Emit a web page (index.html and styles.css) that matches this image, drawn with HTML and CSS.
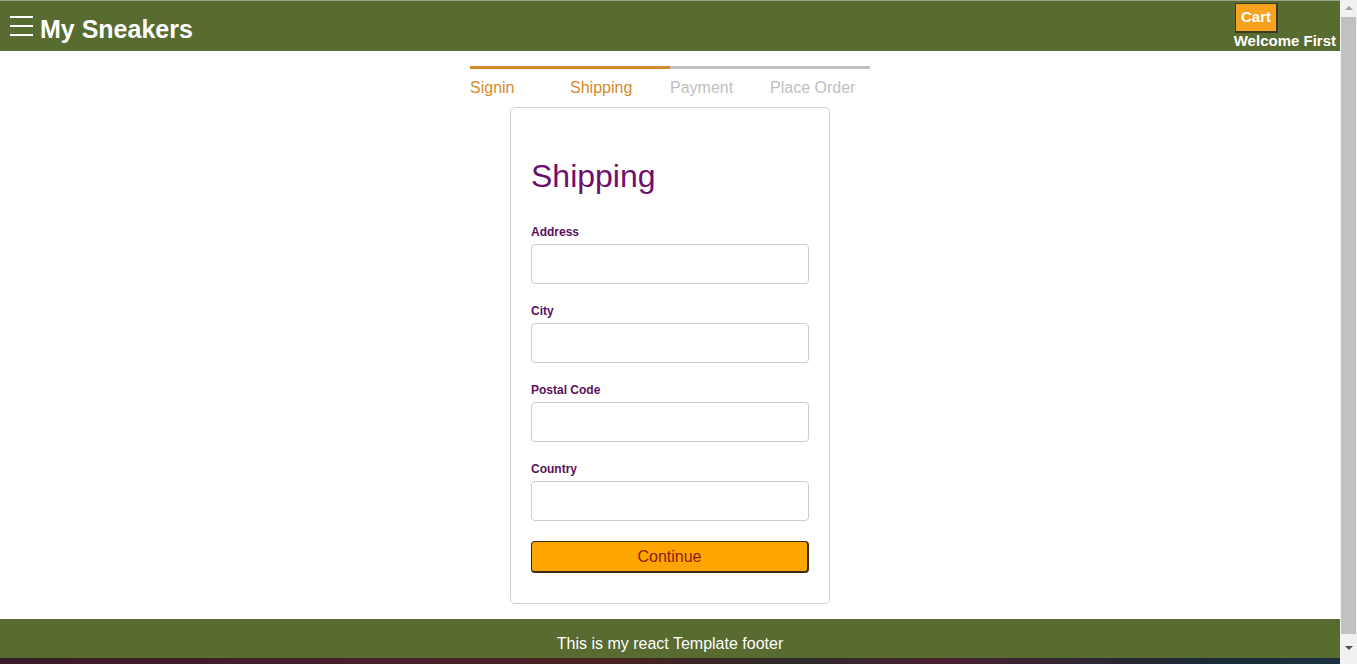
FILE: index.html
```html
<!DOCTYPE html>
<html lang="en">
<head>
<meta charset="utf-8">
<title>My Sneakers - Shipping</title>
<link rel="stylesheet" href="styles.css">
</head>
<body>
<div class="window">
  <div class="page">
    <header class="header">
      <div class="brand">
        <button class="menu-btn" aria-label="Menu">
          <svg width="23" height="22" viewBox="0 0 23 22"><path d="M0 2h23M0 11h23M0 20h23" stroke="#fff" stroke-width="2.2" fill="none"/></svg>
        </button>
        <a class="brand-name" href="#">My Sneakers</a>
      </div>
      <div class="header-links">
        <a class="cart" href="#">Cart</a>
        <a class="welcome" href="#">Welcome First</a>
      </div>
    </header>
    <main class="main">
      <div class="steps">
        <div class="step active">Signin</div>
        <div class="step active">Shipping</div>
        <div class="step">Payment</div>
        <div class="step">Place Order</div>
      </div>
      <form class="card">
        <h1 class="title">Shipping</h1>
        <div class="field">
          <label class="label" for="address">Address</label>
          <input class="input" id="address" type="text">
        </div>
        <div class="field">
          <label class="label" for="city">City</label>
          <input class="input" id="city" type="text">
        </div>
        <div class="field">
          <label class="label" for="postal">Postal Code</label>
          <input class="input" id="postal" type="text">
        </div>
        <div class="field">
          <label class="label" for="country">Country</label>
          <input class="input" id="country" type="text">
        </div>
        <button class="continue" type="button">Continue</button>
      </form>
    </main>
    <footer class="footer">This is my react Template footer</footer>
    <div class="taskbar"></div>
  </div>
  <div class="scrollbar">
    <div class="arrow up"></div>
    <div class="thumb"></div>
    <div class="arrow down"></div>
  </div>
</div>
</body>
</html>
```
FILE: styles.css
```css
* { box-sizing: border-box; }
html, body { margin: 0; padding: 0; height: 100%; overflow: hidden; }
body { font-family: "Liberation Sans", Arial, sans-serif; background: #fff; }

.window { display: flex; height: 664px; }
.page { flex: 1; display: flex; flex-direction: column; min-width: 0; }

.header {
  height: 51px;
  background: #586b31;
  border-top: 1px solid #9aa38a;
  display: flex;
  justify-content: space-between;
  align-items: flex-start;
  padding: 0 4px 0 10px;
  flex-shrink: 0;
}
.brand { display: flex; align-items: center; height: 50px; }
.menu-btn { background: none; border: 0; padding: 0; margin: 0 7px 0 0; display: flex; cursor: pointer; }
.brand-name { color: #fff; font-weight: bold; font-size: 25px; text-decoration: none; margin-top: 6px; }
.header-links { display: flex; flex-direction: column; align-items: flex-end; }
.cart {
  margin-top: 2px;
  margin-right: 58px;
  background: #f7a21c;
  color: #fff;
  font-weight: bold;
  font-size: 15px;
  text-decoration: none;
  padding: 4px 5px 5px;
  border: 1px solid #3d3a22;
  border-width: 1px 2px 2px 1px;
  line-height: 18px;
}
.welcome { color: #fff; font-weight: bold; font-size: 15px; text-decoration: none; line-height: 18px; margin-top: -1px; }

.main { flex: 1; display: flex; flex-direction: column; align-items: center; padding-top: 15px; }
.steps { display: flex; width: 400px; }
.step {
  flex: 1;
  border-top: 3px solid #c0c0c0;
  color: #c0c0c0;
  font-size: 16px;
  padding-top: 9px;
  line-height: 19px;
}
.step.active { border-top-color: #d68a2c; color: #d68a2c; }

.card {
  width: 320px;
  margin-top: 10px;
  border: 1px solid #d0d0d0;
  border-radius: 5px;
  padding: 20px 20px 30px;
  display: flex;
  flex-direction: column;
}
.title { margin: 30px 0 30px; font-size: 32px; font-weight: normal; color: #6c106c; line-height: 37px; }
.field { display: flex; flex-direction: column; margin-bottom: 20px; }
.label { color: #5c0f5c; font-weight: bold; font-size: 12px; line-height: 14px; margin-bottom: 5px; }
.input {
  height: 40px;
  border: 1px solid #cccccc;
  border-radius: 4px;
  font-size: 16px;
  padding: 0 8px;
  font-family: inherit;
}
.continue {
  margin-top: 0;
  height: 32px;
  background: #ffa500;
  border: 1px solid #3a2a10;
  border-width: 1px 2px 2px 1px;
  border-radius: 4px;
  color: #8b1a1a;
  font-size: 16px;
  font-family: inherit;
  cursor: pointer;
}

.footer {
  height: 39px;
  background: #586b31;
  color: #fff;
  font-size: 16px;
  display: flex;
  align-items: center;
  justify-content: center;
  padding-top: 10px;
  flex-shrink: 0;
  margin-top: 15px;
}
.taskbar {
  height: 6px;
  flex-shrink: 0;
  background: linear-gradient(90deg, #3a1a28 0%, #48202c 30%, #4a2020 45%, #2d2a2a 60%, #4a2030 70%, #1a2a35 90%, #1a3040 100%);
}

.scrollbar { width: 17px; background: #f1f1f1; display: flex; flex-direction: column; align-items: center; flex-shrink: 0; }
.arrow { width: 0; height: 0; border-left: 4px solid transparent; border-right: 4px solid transparent; margin: 6px 0; }
.arrow.up { border-bottom: 4px solid #a3a3a3; }
.arrow.down { border-top: 4px solid #505050; margin-bottom: 14px; }
.thumb { width: 15px; flex: 1; background: #c1c1c1; margin: 1px 0 6px; }
```
